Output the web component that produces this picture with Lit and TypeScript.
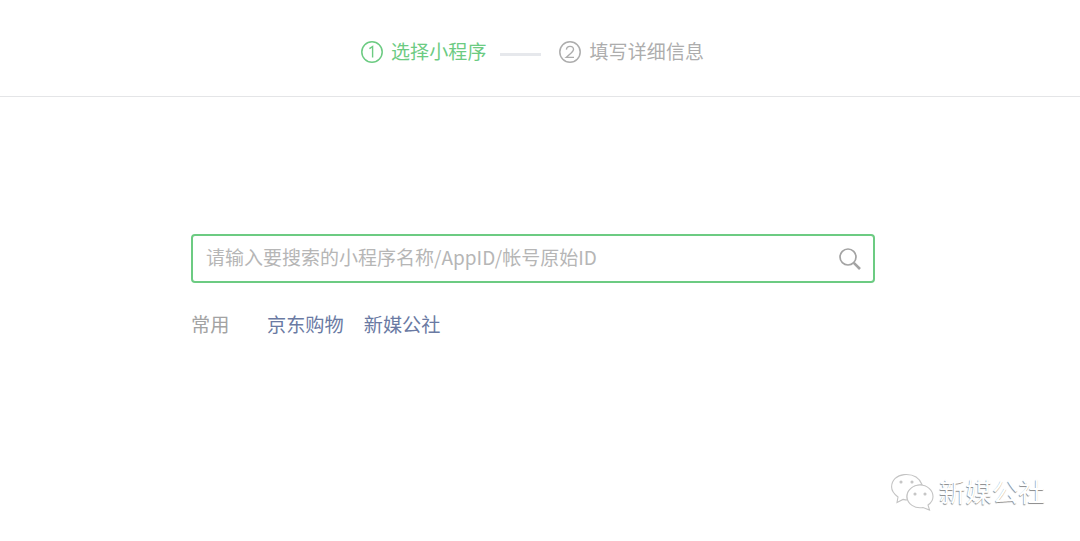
import { LitElement, html, css } from "lit";
import { customElement } from "lit/decorators.js";

@customElement("app-root")
export class AppRoot extends LitElement {
  static styles = css`
    :host {
      display: block;
      position: relative;
      width: 1080px;
      height: 541px;
      overflow: hidden;
      background: #fff;
      font-family: "Noto Sans CJK SC", "Liberation Sans", sans-serif;
      font-size: 19.2px;
    }
    .header {
      box-sizing: border-box;
      height: 97px;
      border-bottom: 1px solid #e4e5e7;
      display: flex;
      justify-content: flex-start;
      align-items: flex-start;
      padding: 38px 0 0 361px;
    }
    .step {
      display: flex;
      align-items: center;
      gap: 8px;
      height: 28px;
      color: #adadad;
    }
    .step.on {
      color: #6ccb82;
    }
    .step.two {
      gap: 9px;
    }
    .step svg {
      display: block;
    }
    .step span {
      font-size: 19px;
      letter-spacing: 0.1px;
      line-height: 28px;
      padding-bottom: 2px;
      white-space: nowrap;
    }
    .line {
      width: 41px;
      height: 3px;
      background: #e6e8ec;
      margin: 15px 18px 0 13px;
    }
    .main {
      box-sizing: border-box;
      width: 684px;
      margin: 137px 0 0 191px;
    }
    .search {
      box-sizing: border-box;
      height: 49px;
      border: 2px solid #6ccb82;
      border-radius: 4px;
      display: flex;
      align-items: center;
      justify-content: space-between;
      padding: 0 11px 0 14px;
      color: #b6b6b6;
    }
    .search span {
      font-size: 19px;
      line-height: 28px;
      padding-bottom: 3px;
      margin-left: -1px;
      white-space: nowrap;
    }
    .search svg {
      display: block;
    }
    .common {
      display: flex;
      align-items: center;
      margin-top: 27px;
      line-height: 28px;
    }
    .label {
      width: 76px;
      color: #a3a3a3;
    }
    .link {
      color: #6a7aa3;
      margin-right: 20px;
    }
    .mark {
      position: absolute;
      left: 891px;
      top: 472px;
      display: flex;
      align-items: flex-start;
    }
    .mark svg {
      display: block;
      margin-top: 2px;
      overflow: visible;
    }
    .mark span {
      font-size: 26.5px;
      line-height: 40px;
      color: #fff;
      margin: -1px 0 0 0;
      white-space: nowrap;
      text-shadow: -0.6px 0.6px 0.7px #8c8c8c;
    }
  `;

  render() {
    return html`
      <div class="header">
        <div class="step on">
          <svg width="22" height="22" viewBox="0 0 22 22" fill="none" stroke="currentColor">
            <circle cx="11" cy="11" r="10.2" stroke-width="1.5"></circle>
            <path d="M8.4 7.6 L11.6 5.6 V16.6" stroke-width="1.4"></path>
          </svg>
          <span>选择小程序</span>
        </div>
        <div class="line"></div>
        <div class="step two">
          <svg width="22" height="22" viewBox="0 0 22 22" fill="none" stroke="currentColor">
            <circle cx="11" cy="11" r="10.2" stroke-width="1.5"></circle>
            <path d="M7.4 8.6 C7.6 6.4 9.2 5.4 11 5.4 C13 5.4 14.5 6.7 14.5 8.5 C14.5 10.6 12.4 11.8 7.2 16.4 H15" stroke-width="1.4"></path>
          </svg>
          <span>填写详细信息</span>
        </div>
      </div>
      <div class="main">
        <div class="search">
          <span>请输入要搜索的小程序名称/AppID/帐号原始ID</span>
          <svg width="24" height="24" viewBox="0 0 24 24" fill="none" stroke="#a3a3a3">
            <circle cx="10" cy="10" r="8" stroke-width="1.7"></circle>
            <path d="M15.8 15.8 L22 22" stroke-width="2.6"></path>
          </svg>
        </div>
        <div class="common">
          <div class="label">常用</div>
          <div class="link">京东购物</div>
          <div class="link">新媒公社</div>
        </div>
      </div>
      <div class="mark">
        <svg width="48" height="40" viewBox="0 0 48 40" fill="none" stroke="#c4c4c4" stroke-width="1.1">
          <path d="M13 0.6 C21 0 28 3 31 10.5 C24 11 16 15 16 22.5 C16 24 16.3 25 16.6 26 C15 26 13.5 25.8 12 25.4 L6 28.5 L7 23 C3 20 0.6 16.5 0.6 13 C0.6 6 6 1.2 13 0.6 Z" fill="#fff"></path>
          <path d="M29 11 C36 11 42 16 42 22.5 C42 26 40 29 37 31 L38.5 36 L32 33.5 C24 35 16 30 16 22.5 C16 16 22 11 29 11 Z" fill="#fff"></path>
          <circle cx="10" cy="8" r="1" fill="#ccc"></circle>
          <circle cx="21" cy="8" r="1" fill="#ccc"></circle>
          <circle cx="24" cy="20" r="1" fill="#ccc"></circle>
          <circle cx="34" cy="20" r="1" fill="#ccc"></circle>
        </svg>
        <span>新媒公社</span>
      </div>
    `;
  }
}
